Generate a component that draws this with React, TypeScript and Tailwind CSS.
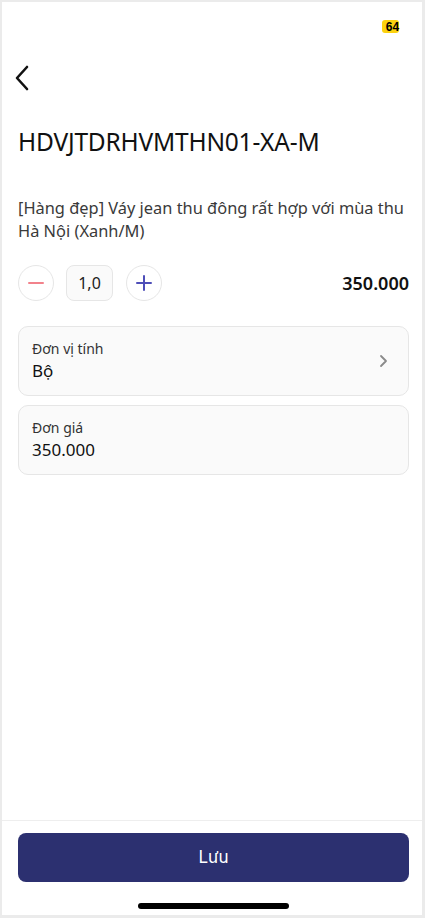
import React from "react";

export default function App() {
  const font = { fontFamily: '"Noto Sans", "Open Sans", sans-serif' };
  return (
    <div
      className="w-[425px] h-[918px] bg-white border-l-2 border-t-2 border-r-[3px] border-b-[3px] border-[#ebebeb] flex flex-col overflow-hidden"
      style={font}
    >
      {/* status bar */}
      <div className="h-[46px] flex items-start justify-end pr-[23px] pt-[18px]">
        <div className="relative h-[13px] w-[17px] rounded-[3px] bg-[#fcd20f] flex items-center justify-center">
          <span className="text-[12px] font-bold leading-none text-black pl-[4px]" style={{ fontFamily: '"Liberation Sans", sans-serif' }}>64</span>
        </div>
      </div>

      {/* back */}
      <div className="h-[60px] flex items-center pl-[10px]">
        <svg width="22" height="26" viewBox="0 0 22 26" fill="none">
          <path d="M15 2 L5 13 L15 24" stroke="#111" strokeWidth="2.6" strokeLinecap="round" strokeLinejoin="round" />
        </svg>
      </div>

      <div className="pl-4 pr-[13px] flex flex-col flex-1">
        <h1 className="mt-[18px] text-[24.5px] leading-[32px] text-[#111] font-normal tracking-[-0.2px]">HDVJTDRHVMTHN01-XA-M</h1>

        <p className="mt-[38px] text-[16.4px] leading-[23px] text-[#3a3a3a]">
          [Hàng đẹp] Váy jean thu đông rất hợp với mùa thu Hà Nội (Xanh/M)
        </p>

        <div className="mt-[23px] flex items-center">
          <div className="w-[36px] h-[36px] rounded-full border border-[#e6e6e6] flex items-center justify-center">
            <svg width="16" height="16" viewBox="0 0 16 16"><path d="M1 8 H15" stroke="#f2828b" strokeWidth="2" strokeLinecap="round" /></svg>
          </div>
          <div className="ml-[12px] w-[47px] h-[36px] rounded-lg border border-[#e6e6e6] bg-[#fafafa] flex items-center justify-center text-[16px] text-[#222]">1,0</div>
          <div className="ml-[13px] w-[36px] h-[36px] rounded-full border border-[#e6e6e6] flex items-center justify-center">
            <svg width="16" height="16" viewBox="0 0 16 16"><path d="M1 8 H15 M8 1 V15" stroke="#4e4eb8" strokeWidth="2" strokeLinecap="round" /></svg>
          </div>
          <div className="ml-auto text-[18px] font-semibold text-[#111]">350.000</div>
        </div>

        <div className="mt-[25px] h-[70px] rounded-[10px] border border-[#e6e6e6] bg-[#fafafa] flex items-center pl-[13px] pr-[20px]">
          <div className="flex flex-col">
            <span className="text-[14px] leading-[20px] text-[#333]">Đơn vị tính</span>
            <span className="text-[17px] leading-[24px] text-[#111]">Bộ</span>
          </div>
          <svg className="ml-auto" width="10" height="14" viewBox="0 0 10 14" fill="none">
            <path d="M3 2 L8 7 L3 12" stroke="#8a8a8a" strokeWidth="1.8" strokeLinecap="round" strokeLinejoin="round" />
          </svg>
        </div>

        <div className="mt-[9px] h-[70px] rounded-[10px] border border-[#e6e6e6] bg-[#fafafa] flex items-center pl-[13px]">
          <div className="flex flex-col">
            <span className="text-[14px] leading-[20px] text-[#333]">Đơn giá</span>
            <span className="text-[17px] leading-[24px] text-[#111]">350.000</span>
          </div>
        </div>
      </div>

      {/* footer */}
      <div className="border-t border-[#eeeeee] pt-[12px] pl-4 pr-[13px] flex flex-col items-center">
        <button className="w-full h-[49px] rounded-lg bg-[#2c3070] text-white text-[17px]" style={{ fontFamily: 'Inter, sans-serif' }}>Lưu</button>
        <div className="mt-[21px] mb-[6px] w-[151px] h-[6px] rounded-full bg-black"></div>
      </div>
    </div>
  );
}
